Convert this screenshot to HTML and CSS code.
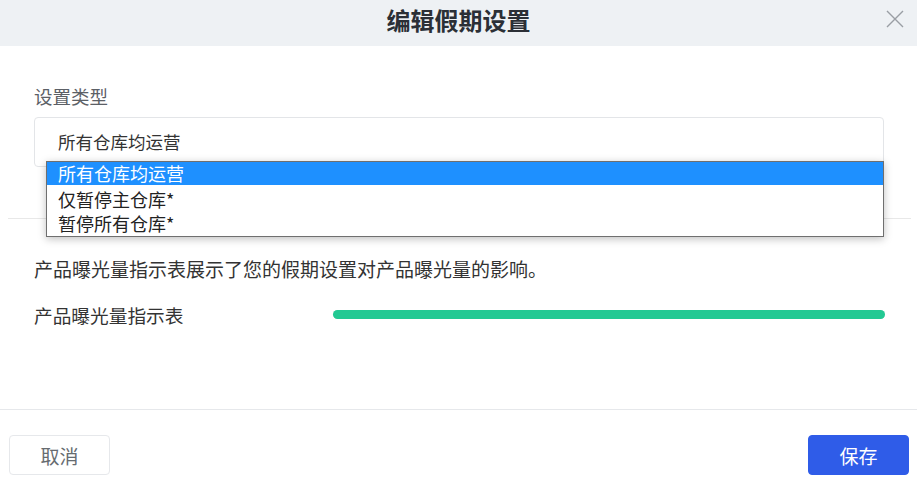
FILE: index.html
```html
<!DOCTYPE html>
<html lang="zh-CN">

<head>
    <meta charset="UTF-8">
    <meta name="viewport" content="width=device-width, initial-scale=1.0">
    <title>编辑假期设置</title>
    <link rel="stylesheet" href="styles.css">
</head>

<body>
    <div class="modal">
        <header class="modal-head">
            <h1>编辑假期设置</h1>
            <button class="close" aria-label="关闭">
                <svg width="18" height="18" viewBox="0 0 18 18">
                    <path d="M1 1 L17 17 M17 1 L1 17" stroke="#9a9ea4" stroke-width="1.4" fill="none" />
                </svg>
            </button>
        </header>

        <main class="modal-body">
            <section class="form-part">
                <label class="field-label">设置类型</label>
                <div class="select-wrap">
                    <div class="select-box">所有仓库均运营</div>
                    <ul class="select-list">
                        <li class="selected">所有仓库均运营</li>
                        <li>仅暂停主仓库*</li>
                        <li>暂停所有仓库*</li>
                    </ul>
                </div>
            </section>
            <hr class="divider">
            <section class="info-part">
                <p class="desc">产品曝光量指示表展示了您的假期设置对产品曝光量的影响。</p>
                <div class="meter-row">
                    <span>产品曝光量指示表</span>
                    <div class="meter"><div class="meter-fill" style="width: 100%"></div></div>
                </div>
            </section>
        </main>

        <footer class="modal-foot">
            <button class="btn btn-cancel">取消</button>
            <button class="btn btn-save">保存</button>
        </footer>
    </div>
</body>

</html>
```

FILE: styles.css
```css
* {
    box-sizing: border-box;
}

body {
    margin: 0;
    background-color: white;
    font-family: "Noto Sans CJK SC", "Noto Sans", sans-serif;
    color: #333;
}

.modal {
    width: 917px;
    height: 490px;
}

.modal-head {
    position: relative;
    height: 46px;
    background-color: #eef1f4;
    display: flex;
    align-items: center;
    justify-content: center;
}

.modal-head h1 {
    margin: 0;
    font-size: 24px;
    line-height: 32px;
    font-weight: bold;
    color: #2b2f36;
    margin-top: -6px;
}

.close {
    position: absolute;
    right: 13px;
    top: 10px;
    border: none;
    background: none;
    padding: 0;
    width: 18px;
    height: 18px;
}

.modal-body {
    height: 363px;
}

.form-part {
    padding: 38px 33px 0 34px;
}

.field-label {
    display: block;
    font-size: 18.5px;
    line-height: 24px;
    color: #5c6066;
    margin-bottom: 9px;
}

.select-wrap {
    position: relative;
}

.select-box {
    height: 50px;
    border: 1px solid #e3e5e8;
    border-radius: 4px;
    padding-left: 23px;
    font-size: 17.5px;
    line-height: 48px;
    color: #333;
}

.select-list {
    position: absolute;
    left: 12px;
    right: 0;
    top: 44px;
    margin: 0;
    padding: 0;
    list-style: none;
    background-color: white;
    border: 1px solid #6f6f6f;
    box-shadow: 0 2px 8px rgba(0, 0, 0, 0.25);
}

.select-list li {
    height: 25px;
    line-height: 24px;
    padding-left: 11px;
    font-size: 18px;
    color: #222;
}

.select-list li.selected {
    background-color: #1e90ff;
    color: white;
    height: 23px;
    line-height: 23px;
}

.select-list li:nth-child(2) {
    padding-top: 2px;
    height: 26px;
}

.divider {
    margin: 51px 6px 0 8px;
    border: none;
    border-top: 1px solid #e8e8e8;
}

.info-part {
    padding: 38px 32px 0 34px;
}

.desc {
    margin: 0;
    font-size: 19px;
    line-height: 24px;
    color: #333;
}

.meter-row {
    margin-top: 22px;
    display: flex;
    align-items: center;
    font-size: 18.7px;
    line-height: 24px;
}

.meter-row span {
    width: 299px;
}

.meter {
    flex: 1;
    height: 9px;
    margin-top: -2px;
    border-radius: 5px;
    background-color: #e6e6e6;
}

.meter-fill {
    height: 9px;
    border-radius: 5px;
    background-color: #22c993;
}

.modal-foot {
    border-top: 1px solid #e6e8eb;
    display: flex;
    justify-content: space-between;
    padding: 25px 8px 0 9px;
}

.btn {
    width: 101px;
    height: 40px;
    border-radius: 4px;
    font-family: "Noto Sans CJK SC", sans-serif;
    font-size: 19px;
}

.btn-cancel {
    background-color: white;
    border: 1px solid #e6e8eb;
    color: #666b70;
}

.btn-save {
    background-color: #2f5ce8;
    border: 1px solid #2f5ce8;
    color: white;
}
```
